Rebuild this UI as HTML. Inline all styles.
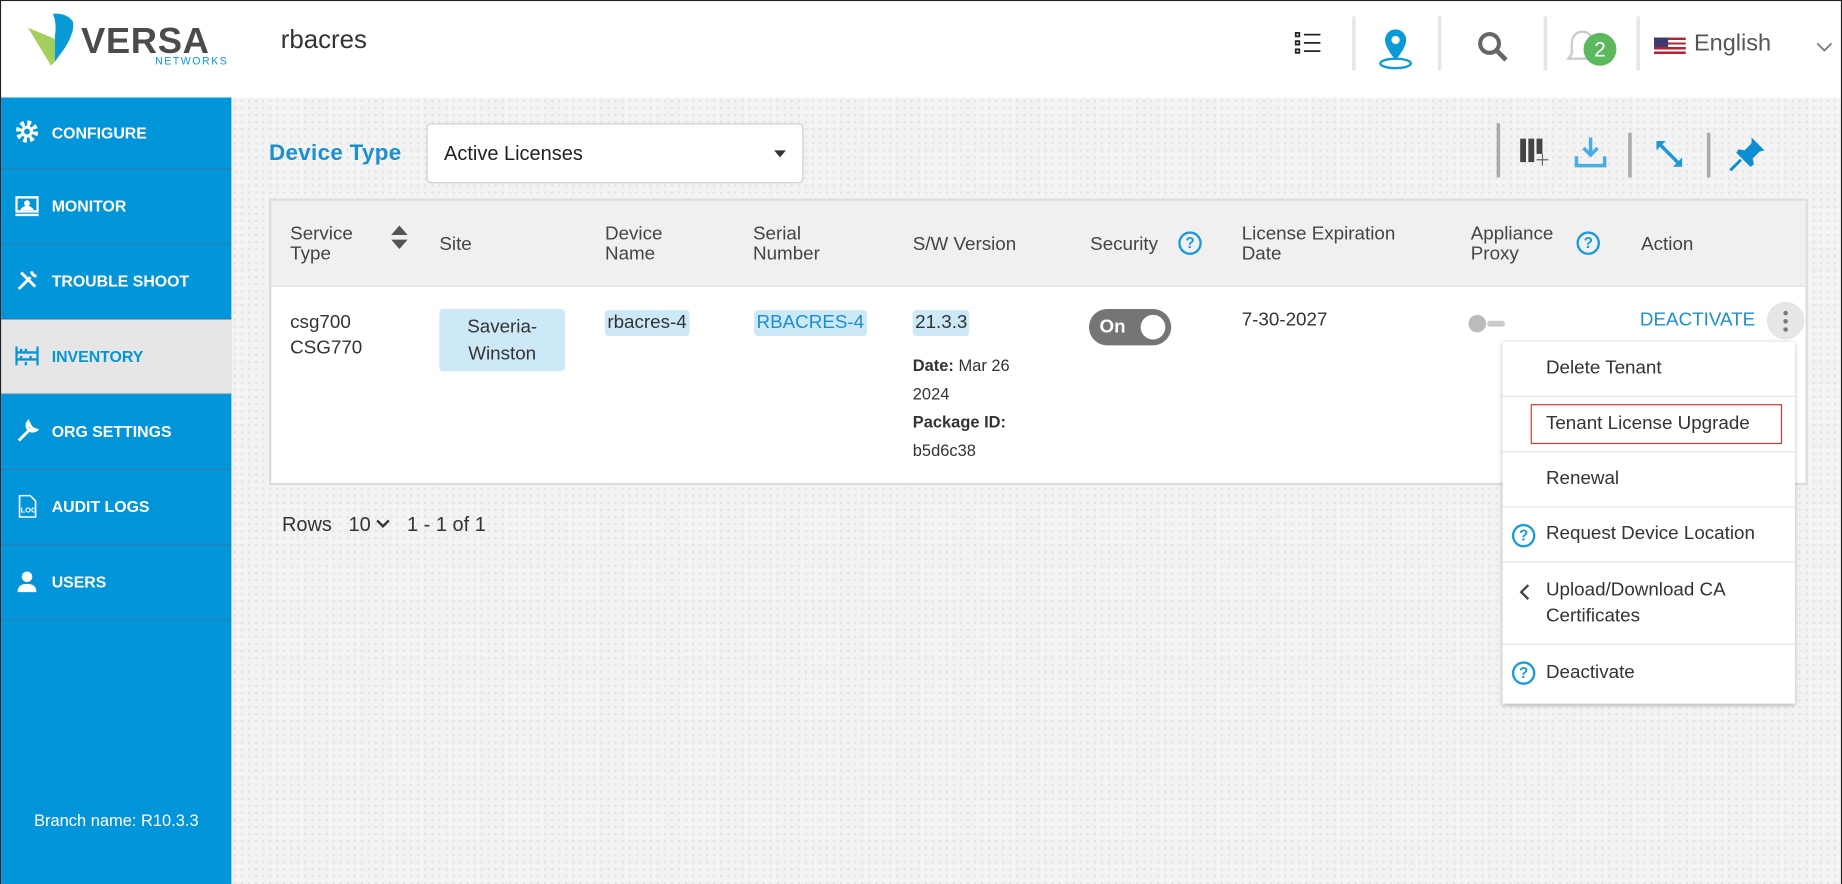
<!DOCTYPE html>
<html><head><meta charset="utf-8"><style>
*{box-sizing:border-box;margin:0;padding:0}
html,body{width:1842px;height:884px;overflow:hidden;background:#fff;font-family:"Liberation Sans",sans-serif}
#w{width:1568px;height:753px;transform:scale(1.17474);transform-origin:0 0;position:relative;border:1px solid #222;background:#f4f4f4}
.abs{position:absolute}
.top{left:0;top:0;width:1566px;height:82px;background:#fff;box-shadow:0 2px 4px rgba(0,0,0,.12)}
.side{left:0;top:82px;width:196px;height:670px;background:#0395d9}
.nav{height:64px;border-bottom:1px solid #2a7fb0;color:#fff;font-weight:bold;font-size:13.5px;display:flex;align-items:center;padding-left:43px;position:relative}
.nav:first-child{height:61px}
.nav.act{background:#e6e6e6;color:#0395d9}
.nav .ic{position:absolute;left:12px;top:21px;width:20px;height:20px}
.nav:first-child .ic{top:19px}
.main{left:196px;top:82px;width:1370px;height:670px;background:#f3f3f3;background-image:radial-gradient(#e2e2e2 1px,transparent 1px);background-size:6px 6px}
.th{font-size:16px;color:#444;position:absolute;line-height:17px}
.td{font-size:16px;color:#333;position:absolute}
.chip{position:absolute;background:#cde9f7;border-radius:3px;font-size:16px;color:#333}
.menu{left:1278px;top:290px;width:249px;height:308px;background:#fff;box-shadow:0 1px 4px rgba(0,0,0,.3)}
.mi{height:47px;border-bottom:1px solid #e4e4e4;font-size:16px;color:#333;display:flex;align-items:center;padding-left:37px;position:relative}
.q{display:inline-block;width:20px;height:20px;border:2px solid #1b9ad8;border-radius:50%;color:#1b9ad8;font-size:13px;font-weight:bold;text-align:center;line-height:16px}
</style></head><body><div id="w">
<div class="abs top">
 <svg class="abs" style="left:22px;top:9px" width="46" height="48"><path d="M1 16 L24 54 L28 50 L30 28Z" fill="#a3cf5d" transform="scale(.85)"/><path d="M26 2 Q40 1 46 10 Q48 20 38 36 L28 50 L28 24 Q30 12 26 2Z" fill="#0b9ad8" transform="scale(.85)"/></svg>
 <div class="abs" style="left:68px;top:16px;font-size:31px;color:#4a4a4f;letter-spacing:.5px;font-weight:bold">VERSA</div>
 <div class="abs" style="left:131px;top:46px;font-size:9px;color:#0b9ad8;letter-spacing:1.3px">NETWORKS</div>
 <div class="abs" style="left:238px;top:20px;font-size:22px;color:#333">rbacres</div>
 <svg class="abs" style="left:1101px;top:25px" width="24" height="22"><g stroke="#222" stroke-width="1.5" fill="none"><rect x="1" y="2" width="3" height="3"/><rect x="1" y="9" width="3" height="3"/><rect x="1" y="16" width="3" height="3"/><path d="M8 3.5H22M8 10.5H22M8 17.5H22"/></g></svg>
 <div class="abs" style="left:1150px;top:13px;width:3px;height:46px;background:#e6e6e6"></div>
 <svg class="abs" style="left:1172px;top:22px" width="30" height="38"><path d="M15 2a9 9 0 0 0-9 9c0 7 9 17 9 17s9-10 9-17a9 9 0 0 0-9-9z" fill="#0b9ad8"/><circle cx="15" cy="11" r="3.5" fill="#fff"/><ellipse cx="15" cy="31" rx="13" ry="4" fill="none" stroke="#0b9ad8" stroke-width="2"/></svg>
 <div class="abs" style="left:1223px;top:13px;width:3px;height:46px;background:#e6e6e6"></div>
 <svg class="abs" style="left:1256px;top:25px" width="28" height="28"><circle cx="11" cy="11" r="8" fill="none" stroke="#666" stroke-width="3.5"/><path d="M17 17l8 8" stroke="#666" stroke-width="4"/></svg>
 <div class="abs" style="left:1313px;top:13px;width:3px;height:46px;background:#e6e6e6"></div>
 <svg class="abs" style="left:1332px;top:22px" width="28" height="36"><path d="M14 4c-6 0-9 5-9 10v9l-3 4h24l-3-4v-9c0-5-3-10-9-10z" fill="none" stroke="#ccc" stroke-width="2"/></svg>
 <div class="abs" style="left:1347px;top:27px;width:28px;height:28px;border-radius:50%;background:#5cb85c;color:#fff;font-size:18px;text-align:center;line-height:28px">2</div>
 <div class="abs" style="left:1392px;top:13px;width:3px;height:46px;background:#e6e6e6"></div>
 <div class="abs" style="left:1407px;top:31px;width:27px;height:15px;background:repeating-linear-gradient(#b22234 0 2px,#fff 2px 4px)"><div style="width:12px;height:8px;background:#3c3b6e"></div></div>
 <div class="abs" style="left:1441px;top:25px;font-size:20px;color:#555">English</div>
 <svg class="abs" style="left:1545px;top:35px" width="14" height="9"><path d="M1 1l6 6 6-6" stroke="#777" stroke-width="1.5" fill="none"/></svg>
</div>
<div class="abs side">
 <div class="nav"><svg class="ic" viewBox="0 0 20 20"><circle cx="10" cy="10" r="7" fill="none" stroke="#fff" stroke-width="5" stroke-dasharray="3 2.5"/><circle cx="10" cy="10" r="5" fill="#fff"/><circle cx="10" cy="10" r="2.5" fill="#0395d9"/></svg>CONFIGURE</div>
 <div class="nav"><svg class="ic" viewBox="0 0 20 20"><rect x="1" y="3" width="18" height="12" fill="none" stroke="#fff" stroke-width="2"/><circle cx="10" cy="8" r="2.5" fill="#fff"/><path d="M5 14q5-6 10 0M0 18h20" stroke="#fff" stroke-width="2" fill="#fff"/></svg>MONITOR</div>
 <div class="nav"><svg class="ic" viewBox="0 0 20 20"><path d="M3 17L13 7M5 3l12 12M14 2a4 4 0 0 0 4 4" stroke="#fff" stroke-width="2.5" fill="none"/></svg>TROUBLE SHOOT</div>
 <div class="nav act"><svg class="ic" viewBox="0 0 20 20"><path d="M1 2v16M19 2v16M1 7h18M1 13h18M5 4v3M9 4v3M5 10v3M13 10v3M9 15v3" stroke="#0395d9" stroke-width="2" fill="none"/></svg>INVENTORY</div>
 <div class="nav"><svg class="ic" viewBox="0 0 20 20"><path d="M3 18L12 9M11 2a5 5 0 0 0 7 7l-3-1-2-2z" stroke="#fff" stroke-width="2.5" fill="none"/></svg>ORG SETTINGS</div>
 <div class="nav"><svg class="ic" viewBox="0 0 20 22"><path d="M3 1h10l5 5v15H3z" fill="none" stroke="#fff" stroke-width="1.5"/><text x="4" y="17" font-size="7" fill="#fff" font-family="Liberation Sans">LOG</text></svg>AUDIT LOGS</div>
 <div class="nav"><svg class="ic" viewBox="0 0 20 20"><circle cx="10" cy="6" r="4.5" fill="#fff"/><path d="M2 19q0-7 8-7t8 7z" fill="#fff"/></svg>USERS</div>
 <div class="abs" style="left:28px;top:607px;color:#fff;font-size:14px">Branch name: R10.3.3</div>
</div>
<div class="abs main">
 <div class="abs" style="left:32px;top:37px;font-size:19px;color:#1b8fd0;font-weight:bold;letter-spacing:.3px">Device Type</div>
 <div class="abs" style="left:166px;top:22px;width:321px;height:51px;background:#fff;border:1.5px solid #ccc;border-radius:4px;font-size:17px;color:#222;padding:15px 14px">Active Licenses<span style="position:absolute;right:14px;top:22px;border:5px solid transparent;border-top:6px solid #333"></span></div>
 <div class="abs" style="left:1077px;top:22px;width:3px;height:46px;background:#aaa"></div>
 <svg class="abs" style="left:1097px;top:34px" width="28" height="28"><rect x="0" y="1" width="5" height="20" fill="#444"/><rect x="7" y="1" width="5" height="20" fill="#444"/><rect x="14" y="1" width="5" height="13" fill="#444"/><path d="M19 14v10M14 19h10" stroke="#666"/></svg>
 <svg class="abs" style="left:1143px;top:33px" width="28" height="28"><path d="M14 1v14M8 10l6 6 6-6" stroke="#4aaee4" stroke-width="3" fill="none"/><path d="M2 17v8h24v-8" stroke="#4aaee4" stroke-width="3" fill="none"/></svg>
 <div class="abs" style="left:1189px;top:30px;width:3px;height:38px;background:#aaa"></div>
 <svg class="abs" style="left:1213px;top:37px" width="22" height="22"><path d="M4 4l14 14" stroke="#1b9ad8" stroke-width="3"/><path d="M0 0h8l-8 8zM22 22h-8l8-8z" fill="#1b9ad8"/></svg>
 <div class="abs" style="left:1256px;top:30px;width:3px;height:38px;background:#aaa"></div>
 <svg class="abs" style="left:1275px;top:32px" width="34" height="32"><path d="M19 2l11 11-4 1-6 6 1 5-3 2-12-12 2-3 5 1 6-6z" fill="#0b8ed4"/><path d="M10 21L1 30" stroke="#0b8ed4" stroke-width="2.5"/></svg>
 <div class="abs" style="left:32px;top:86px;width:1310px;height:244px;background:#fff;border:2px solid #ddd">
  <div class="abs" style="left:0;top:0;width:1306px;height:73px;background:#f0f0f0;border-bottom:1px solid #ddd"></div>
  <div class="th" style="left:16px;top:20px">Service<br>Type</div>
  <svg class="abs" style="left:101px;top:20px" width="16" height="22"><path d="M8 1l7 8H1zM8 21l7-8H1z" fill="#555"/></svg>
  <div class="th" style="left:143px;top:29px">Site</div>
  <div class="th" style="left:284px;top:20px">Device<br>Name</div>
  <div class="th" style="left:410px;top:20px">Serial<br>Number</div>
  <div class="th" style="left:546px;top:29px">S/W Version</div>
  <div class="th" style="left:697px;top:29px">Security</div>
  <span class="q abs" style="left:772px;top:26px">?</span>
  <div class="th" style="left:826px;top:20px">License Expiration<br>Date</div>
  <div class="th" style="left:1021px;top:20px">Appliance<br>Proxy</div>
  <span class="q abs" style="left:1111px;top:26px">?</span>
  <div class="th" style="left:1166px;top:29px">Action</div>
  <div class="td" style="left:16px;top:93px;line-height:22px">csg700<br>CSG770</div>
  <div class="chip" style="left:143px;top:92px;width:107px;height:53px;text-align:center;padding-top:4px;line-height:23px">Saveria-<br>Winston</div>
  <div class="chip" style="left:284px;top:93px;padding:2px 2px">rbacres-4</div>
  <div class="chip" style="left:411px;top:93px;padding:2px 2px;color:#1b8fd0">RBACRES-4</div>
  <div class="chip" style="left:546px;top:93px;padding:2px 2px">21.3.3</div>
  <div class="td" style="left:546px;top:128px;font-size:14px;line-height:24px"><b>Date:</b> Mar 26<br>2024<br><b>Package ID:</b><br>b5d6c38</div>
  <div class="abs" style="left:696px;top:92px;width:70px;height:31px;border-radius:16px;background:#757575;color:#fff;font-weight:bold;font-size:16px;padding:7px 9px">On<span style="position:absolute;right:5px;top:5px;width:21px;height:21px;border-radius:50%;background:#fff"></span></div>
  <div class="td" style="left:826px;top:93px">7-30-2027</div>
  <div class="abs" style="left:1019px;top:97px;width:15px;height:15px;border-radius:50%;background:#bbb"></div>
  <div class="abs" style="left:1035px;top:102px;width:15px;height:5px;background:#ccc;border-radius:2px"></div>
  <div class="td" style="left:1165px;top:93px;color:#1b8fd0">DEACTIVATE</div>
  <div class="abs" style="left:1273px;top:86px;width:32px;height:32px;border-radius:50%;background:#e6e6e6"><div style="position:absolute;left:14px;top:6px;width:4px;height:20px;background:radial-gradient(circle,#777 1.8px,transparent 2px) 0 0/4px 7px"></div></div>
 </div>
 <div class="abs" style="left:43px;top:354px;font-size:17px;color:#333">Rows&nbsp;&nbsp; 10 <svg width="12" height="8" style="vertical-align:2px"><path d="M1 1l5 5 5-5" stroke="#333" stroke-width="2" fill="none"/></svg>&nbsp;&nbsp; 1 - 1 of 1</div>
</div>
<div class="abs menu">
 <div class="mi">Delete Tenant</div>
 <div class="mi"><div style="position:absolute;left:24px;top:6px;width:214px;height:34px;border:1.5px solid #d33"></div>Tenant License Upgrade</div>
 <div class="mi">Renewal</div>
 <div class="mi"><span class="q abs" style="left:8px;top:14px">?</span>Request Device Location</div>
 <div class="mi" style="height:70px;line-height:22px"><svg class="abs" style="left:14px;top:18px" width="10" height="14"><path d="M8 1L2 7l6 6" stroke="#444" stroke-width="2" fill="none"/></svg>Upload/Download CA<br>Certificates</div>
 <div class="mi" style="border:none"><span class="q abs" style="left:8px;top:14px">?</span>Deactivate</div>
</div>
</div></body></html>
